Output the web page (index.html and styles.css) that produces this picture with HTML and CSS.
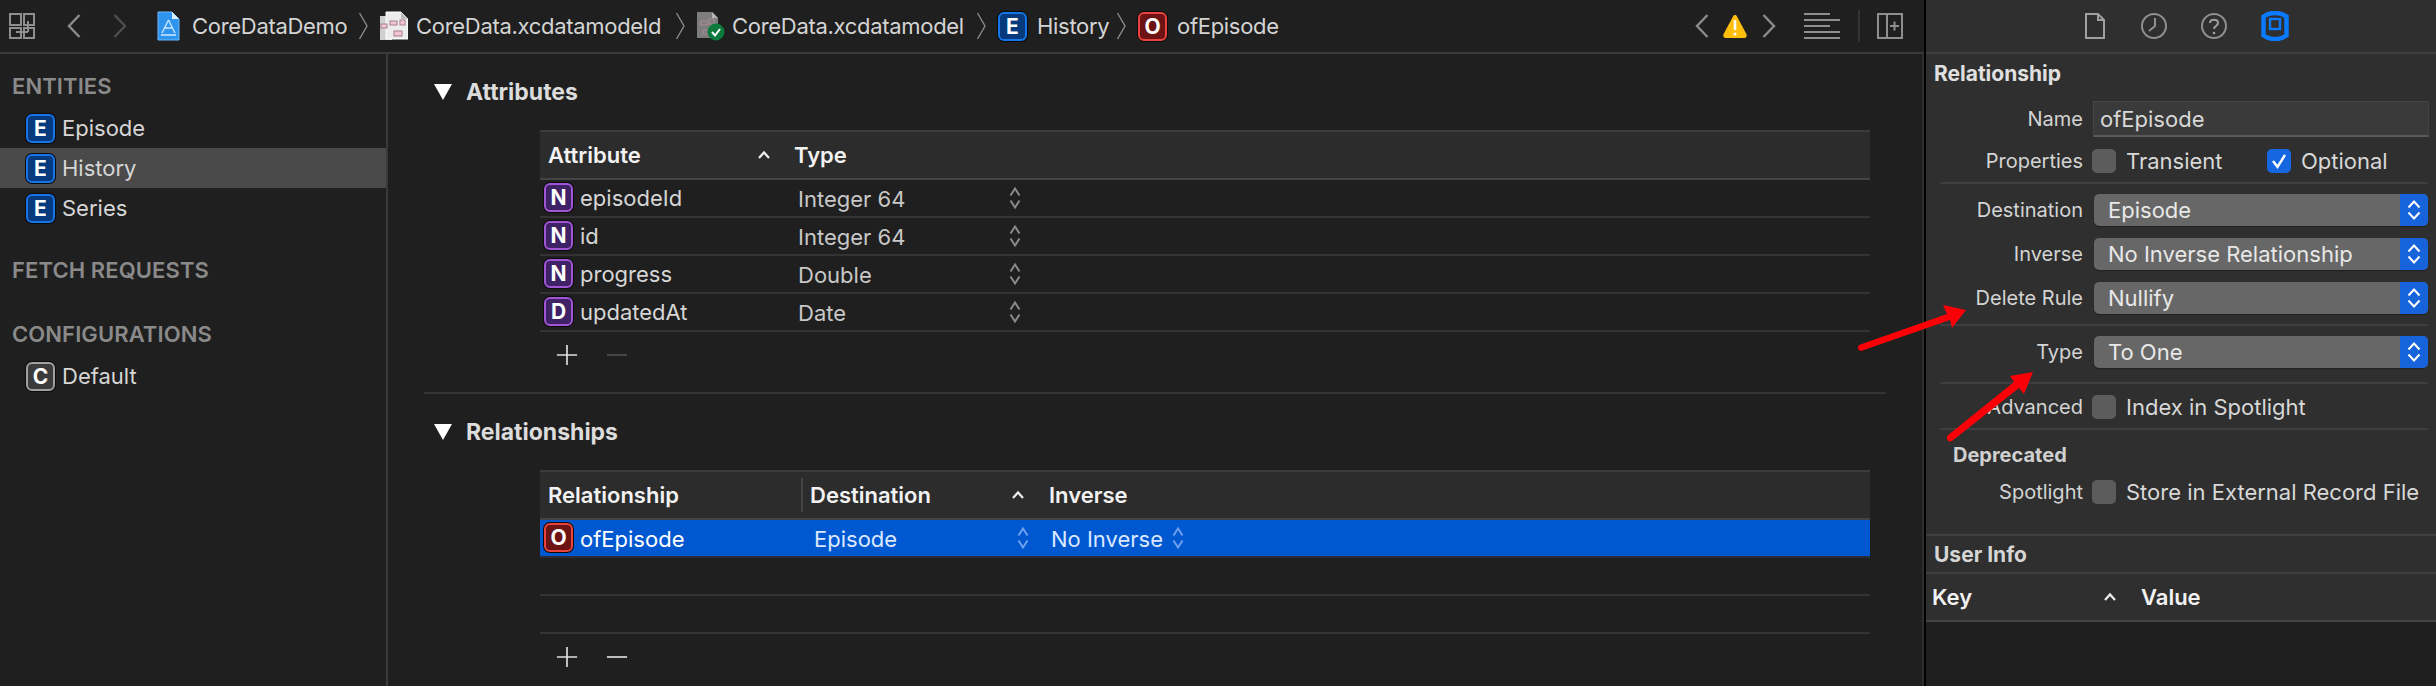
FILE: index.html
```html
<!DOCTYPE html>
<html lang="en">
<head>
<meta charset="utf-8">
<title>CoreData model editor</title>
<link rel="stylesheet" href="styles.css">
</head>
<body>
<svg class="defs" width="0" height="0">
  <symbol id="updown" viewBox="0 0 12 24"><path d="M1.500 9.500 L6 2.500 L10.500 9.500 M1.500 14.500 L6 21.500 L10.500 14.500" fill="none" stroke="currentColor" stroke-width="2"/></symbol>
  <symbol id="sort" viewBox="0 0 14 10"><path d="M2 8 L7 2.500 L12 8" fill="none" stroke="currentColor" stroke-width="2.200"/></symbol>
  <symbol id="sep" viewBox="0 0 11 28"><path d="M1.500 1 L9 14 L1.500 27" fill="none" stroke="#8a8a8a" stroke-width="1.400"/></symbol>
  <symbol id="plus" viewBox="0 0 24 24"><path d="M12 1 V23 M1 12 H23" fill="none" stroke="currentColor" stroke-width="1.800"/></symbol>
  <symbol id="minus" viewBox="0 0 24 24"><path d="M1 12 H23" fill="none" stroke="currentColor" stroke-width="1.800"/></symbol>
  <symbol id="selarrows" viewBox="0 0 14 22"><path d="M1.500 8.500 L7 2.500 L12.500 8.500 M1.500 13.500 L7 19.500 L12.500 13.500" fill="none" stroke="#fff" stroke-width="2"/></symbol>
  <symbol id="chevl" viewBox="0 0 14 24"><path d="M12.500 1 L2 12 L12.500 23" fill="none" stroke="currentColor" stroke-width="2.400"/></symbol>
  <symbol id="chevr" viewBox="0 0 14 24"><path d="M1.500 1 L12 12 L1.500 23" fill="none" stroke="currentColor" stroke-width="2.400"/></symbol>
</svg>
<div class="app">
  <div class="editor">
    <header class="toolbar">
      <svg class="ic-grid" width="26" height="26" viewBox="0 0 26 26"><g fill="none" stroke="#8f8f8f" stroke-width="2"><rect x="1" y="1" width="11" height="11"/><path d="M15 1 H25 V12 H15 Z M1 15 H12 V25 H1 Z M15 15 H25 V25 H15 Z M19 8 V19 M7 19 H19"/></g></svg>
      <svg class="nav nav-back" width="14" height="24"><use href="#chevl"/></svg>
      <svg class="nav nav-fwd" width="14" height="24"><use href="#chevr"/></svg>
      <nav class="crumbs">
        <svg class="crumb-file" width="23" height="30" viewBox="0 0 23 30"><path d="M1 1 H15 L22 8 V29 H1 Z" fill="#2f94ee" stroke="#6bbcff"/><path d="M15 1 V8 H22 Z" fill="#d9eeff"/><path d="M11.500 9 L5 22 M11.500 9 L18 22 M7 17 H16 M4 24 H19" stroke="#cfe8ff" stroke-width="1.300" fill="none"/></svg>
        <span class="crumb c1">CoreDataDemo</span>
        <svg class="crumb-sep" width="11" height="28"><use href="#sep"/></svg>
        <svg class="crumb-file" width="28" height="30" viewBox="0 0 28 30"><path d="M0 5 H12 V29 H0 Z" fill="#cfcfcf"/><path d="M6 1 H21 L28 8 V28 H6 Z" fill="#ececec" stroke="#fff"/><path d="M21 1 V8 H28 Z" fill="#bcbcbc"/><g fill="#f2c6d0" stroke="#a77f92"><rect x="10" y="10" width="7" height="4"/><rect x="20" y="9" width="5" height="5"/><rect x="14" y="20" width="8" height="5"/><rect x="1" y="13" width="6" height="4"/></g></svg>
        <span class="crumb c2">CoreData.xcdatamodeld</span>
        <svg class="crumb-sep" width="11" height="28"><use href="#sep"/></svg>
        <svg class="crumb-file" width="28" height="30" viewBox="0 0 28 30"><path d="M0 1 H15 L21 7 V27 H0 Z" fill="#7d7d7d"/><path d="M15 1 V7 H21 Z" fill="#b5b5b5"/><g fill="none" stroke="#a88c95"><rect x="4" y="10" width="6" height="4"/><rect x="12" y="8" width="5" height="5"/><rect x="6" y="19" width="6" height="4"/></g><circle cx="19" cy="21" r="8.500" fill="#0c7a3c"/><path d="M15 21 L18 24.500 L23 18" fill="none" stroke="#fff" stroke-width="2"/></svg>
        <span class="crumb c3">CoreData.xcdatamodel</span>
        <svg class="crumb-sep" width="11" height="28"><use href="#sep"/></svg>
        <span class="badge badge-e">E</span>
        <span class="crumb c4">History</span>
        <svg class="crumb-sep" width="11" height="28"><use href="#sep"/></svg>
        <span class="badge badge-o">O</span>
        <span class="crumb c5">ofEpisode</span>
      </nav>
      <div class="tools">
        <svg class="nav" width="14" height="24"><use href="#chevl"/></svg>
        <svg class="warn" width="24" height="24" viewBox="0 0 24 24"><path d="M12 1 C13 1 13.600 1.600 14 2.400 L23.400 20 C24.300 22 23.200 24 21 24 H3 C0.800 24 -0.300 22 0.600 20 L10 2.400 C10.400 1.600 11 1 12 1 Z" fill="#ffbe0a"/><path d="M12 6 V16" stroke="#fff" stroke-width="2.600"/><circle cx="12" cy="20" r="1.600" fill="#fff"/></svg>
        <svg class="nav nav-next" width="14" height="24"><use href="#chevr"/></svg>
        <svg class="ic-lines" width="36" height="26" viewBox="0 0 36 26"><path d="M0 1 H26 M0 7 H36 M0 13 H26 M0 19 H36 M0 25 H36" stroke="#8f8f8f" stroke-width="2"/></svg>
        <span class="tool-div"></span>
        <svg class="ic-split" width="26" height="26" viewBox="0 0 26 26"><g fill="none" stroke="#8f8f8f" stroke-width="2"><rect x="1" y="1" width="24" height="24"/><path d="M10 1 V25 M13 13 H22 M17.500 8.500 V17.500"/></g></svg>
      </div>
    </header>
    <div class="body">
      <aside class="sidebar">
        <h3 class="group-head">ENTITIES</h3>
        <ul class="list">
          <li class="item"><span class="badge badge-e">E</span>Episode</li>
          <li class="item item-selected"><span class="badge badge-e">E</span>History</li>
          <li class="item"><span class="badge badge-e">E</span>Series</li>
        </ul>
        <h3 class="group-head group-fetch">FETCH REQUESTS</h3>
        <h3 class="group-head group-config">CONFIGURATIONS</h3>
        <ul class="list">
          <li class="item"><span class="badge badge-c">C</span>Default</li>
        </ul>
      </aside>
      <main class="main">
        <section class="section section-line">
          <h2 class="section-head"><span class="tri"></span>Attributes</h2>
          <div class="table">
            <div class="thead attr-cols">
              <span>Attribute</span>
              <svg class="sort" width="14" height="10"><use href="#sort"/></svg>
              <span>Type</span>
            </div>
            <div class="row attr-row"><span class="badge badge-n">N</span><span class="name">episodeId</span><span class="val">Integer 64</span><svg class="updown" width="12" height="24"><use href="#updown"/></svg></div>
            <div class="row attr-row"><span class="badge badge-n">N</span><span class="name">id</span><span class="val">Integer 64</span><svg class="updown" width="12" height="24"><use href="#updown"/></svg></div>
            <div class="row attr-row"><span class="badge badge-n">N</span><span class="name">progress</span><span class="val">Double</span><svg class="updown" width="12" height="24"><use href="#updown"/></svg></div>
            <div class="row attr-row"><span class="badge badge-d">D</span><span class="name">updatedAt</span><span class="val">Date</span><svg class="updown" width="12" height="24"><use href="#updown"/></svg></div>
            <div class="tfoot">
              <svg class="add" width="22" height="22"><use href="#plus"/></svg>
              <svg class="remove remove-off" width="22" height="22"><use href="#minus"/></svg>
            </div>
          </div>
        </section>
        <section class="section">
          <h2 class="section-head"><span class="tri"></span>Relationships</h2>
          <div class="table">
            <div class="thead rel-cols">
              <span class="rel-name">Relationship</span>
              <span class="col-div"></span>
              <span class="rel-dest">Destination</span>
              <svg class="sort" width="14" height="10"><use href="#sort"/></svg>
              <span>Inverse</span>
            </div>
            <div class="row rel-row row-selected"><span class="badge badge-o">O</span><span class="name">ofEpisode</span><span class="val val-dest">Episode</span><svg class="updown" width="12" height="24"><use href="#updown"/></svg><span class="val val-inv">No Inverse</span><svg class="updown" width="12" height="24"><use href="#updown"/></svg></div>
            <div class="row row-empty"></div>
            <div class="row row-empty"></div>
            <div class="tfoot">
              <svg class="add" width="22" height="22"><use href="#plus"/></svg>
              <svg class="remove" width="22" height="22"><use href="#minus"/></svg>
            </div>
          </div>
        </section>
      </main>
    </div>
  </div>
  <aside class="inspector">
    <div class="tabs">
      <svg class="tab-doc" width="20" height="26" viewBox="0 0 20 26"><path d="M1 1 H13 L19 7 V25 H1 Z M13 1 V7 H19" fill="none" stroke="#a0a0a0" stroke-width="2"/></svg>
      <svg width="26" height="26" viewBox="0 0 26 26"><circle cx="13" cy="13" r="12" fill="none" stroke="#8f8f8f" stroke-width="2"/><path d="M14 5 V13 L8 18" fill="none" stroke="#8f8f8f" stroke-width="2"/></svg>
      <svg width="26" height="26" viewBox="0 0 26 26"><circle cx="13" cy="13" r="12" fill="none" stroke="#8f8f8f" stroke-width="2"/><path d="M9 10 C9 5.500 17 5.500 17 10 C17 13 13 13 13 16" fill="none" stroke="#a0a0a0" stroke-width="2"/><circle cx="13" cy="20" r="1.300" fill="#a0a0a0"/></svg>
      <svg width="28" height="30" viewBox="0 0 28 30"><path d="M14 2 C18 2 22 3 25.500 5.500 V24.500 C22 27 18 28 14 28 C10 28 6 27 2.500 24.500 V5.500 C6 3 10 2 14 2 Z" fill="none" stroke="#0a7aff" stroke-width="4.500"/><rect x="9" y="8" width="10" height="10" fill="none" stroke="#0a7aff" stroke-width="2.400"/></svg>
    </div>
    <div class="panel">
      <h4 class="panel-title">Relationship</h4>
      <div class="field field-name"><label class="lab">Name</label><span class="input">ofEpisode</span></div>
      <div class="field field-props">
        <label class="lab">Properties</label>
        <div class="checks">
          <span class="check"></span><span class="check-text check-text-a">Transient</span>
          <span class="check check-on"><svg width="24" height="24" viewBox="0 0 24 24"><path d="M6 12 L10.500 18 L18 6" fill="none" stroke="#fff" stroke-width="2.400"/></svg></span><span class="check-text">Optional</span>
        </div>
      </div>
      <hr class="rule">
      <div class="field field-sel"><label class="lab">Destination</label><div class="select"><span class="sel-text">Episode</span><span class="sel-btn"><svg width="14" height="22"><use href="#selarrows"/></svg></span></div></div>
      <div class="field field-sel field-next"><label class="lab">Inverse</label><div class="select"><span class="sel-text">No Inverse Relationship</span><span class="sel-btn"><svg width="14" height="22"><use href="#selarrows"/></svg></span></div></div>
      <div class="field field-sel field-next"><label class="lab">Delete Rule</label><div class="select"><span class="sel-text">Nullify</span><span class="sel-btn"><svg width="14" height="22"><use href="#selarrows"/></svg></span></div></div>
      <hr class="rule">
      <div class="field field-sel"><label class="lab">Type</label><div class="select"><span class="sel-text">To One</span><span class="sel-btn"><svg width="14" height="22"><use href="#selarrows"/></svg></span></div></div>
      <hr class="rule rule-wide">
      <div class="field field-props field-adv"><label class="lab">Advanced</label><div class="checks"><span class="check"></span><span class="check-text">Index in Spotlight</span></div></div>
      <hr class="rule">
      <h5 class="sub-title">Deprecated</h5>
      <div class="field field-props field-spot"><label class="lab">Spotlight</label><div class="checks"><span class="check"></span><span class="check-text">Store in External Record File</span></div></div>
    </div>
    <h4 class="info-title">User Info</h4>
    <div class="info-head">
      <span class="key">Key</span>
      <svg class="sort" width="14" height="10"><use href="#sort"/></svg>
      <span>Value</span>
    </div>
    <div class="info-body"></div>
  </aside>
  <svg class="arrows" width="2436" height="686" viewBox="0 0 2436 686">
    <path d="M1859 345 L1947 314 L1943 305 L1966 310 L1952 328 L1950 320 L1861 351 Q1856 349 1859 345 Z" fill="#fb0007"/>
    <path d="M1947 436 L2014 382 L2010 376 L2033 372 L2024 394 L2019 388 L1952 441 Q1946 443 1947 436 Z" fill="#fb0007"/>
  </svg>
</div>
</body>
</html>
```
FILE: styles.css
```css
* { box-sizing: border-box; }
html, body { margin: 0; padding: 0; background: #1f1f1f; }
body { width: 2436px; height: 686px; overflow: hidden; font-family: Inter, "Noto Sans", "Liberation Sans", sans-serif; font-size: 22px; color: #d6d6d6; }
.defs { position: absolute; }
h2, h3, h4, h5, ul { margin: 0; padding: 0; list-style: none; }
hr { margin: 0; border: 0; }

.app { position: relative; display: flex; width: 2436px; height: 686px; }
.editor { width: 1924px; display: flex; flex-direction: column; }

/* toolbar */
.toolbar { height: 54px; flex: none; display: flex; align-items: center; border-bottom: 2px solid #3a3a3a; padding-left: 9px; position: relative; }
.nav { color: #8b8b8b; flex: none; }
.nav-back { margin-left: 32px; }
.nav-fwd { margin-left: 32px; color: #4e4e4e; }
.crumbs { display: flex; align-items: center; margin-left: 30px; }
.crumb { white-space: nowrap; color: #d4d4d4; letter-spacing: -0.3px; }
.crumb-sep { margin: 0 0 0 7px; flex: none; }
.crumb-file { flex: none; }
.crumb-sep + .crumb-file, .crumb-sep + .badge { margin-left: 11px; }
.c1 { margin-left: 12px; width: 159px; }
.c2 { margin-left: 8px; width: 252px; }
.c3 { margin-left: 7px; width: 237px; }
.c4 { margin-left: 10px; width: 72px; }
.c5 { margin-left: 10px; }
.tools { margin-left: auto; display: flex; align-items: center; padding-right: 21px; }
.warn { margin-left: 14px; }
.nav-next { margin-left: 15px; }
.ic-lines { margin-left: 28px; }
.tool-div { width: 2px; height: 32px; background: #333; margin-left: 18px; }
.ic-split { margin-left: 17px; }

/* badge */
.badge { flex: none; width: 29px; height: 29px; border-radius: 6px; display: flex; align-items: center; justify-content: center; font-size: 21px; font-weight: 700; color: #fff; border: 2px solid; box-shadow: 0 0 0 1px #0c0c0c; }
.badge-e { background: #063a7c; border-color: #1476e8; }
.badge-n, .badge-d { background: #3f2266; border-color: #a054d6; }
.badge-o { background: #6d1313; border-color: #e8433f; }
.badge-c { background: #3b3b3b; border-color: #a0a0a0; }

/* body */
.body { flex: 1; display: flex; min-height: 0; }
.sidebar { width: 388px; flex: none; border-right: 2px solid #3a3a3a; padding-top: 16px; }
.group-head { height: 32px; display: flex; align-items: center; padding-left: 12px; font-size: 22px; font-weight: 600; color: #8a8a8a; letter-spacing: 0.1px; margin-bottom: 6px; }
.group-fetch { margin-top: 26px; margin-bottom: 0; }
.group-config { margin-top: 32px; }
.item { height: 40px; display: flex; align-items: center; gap: 7px; padding-left: 26px; color: #d6d6d6; }
.item-selected { background: #4a4a4a; }

/* main */
.main { flex: 1; border-right: 2px solid #2e2e2e; padding-left: 36px; padding-top: 22px; min-width: 0; }
.section { width: 1462px; }
.section-line { border-bottom: 2px solid #333; height: 318px; margin-bottom: 22px; }
.section-head { height: 32px; display: flex; align-items: center; gap: 14px; padding-left: 10px; font-size: 23px; font-weight: 700; color: #dcdcdc; margin-bottom: 22px; }
.tri { width: 0; height: 0; border-left: 9px solid transparent; border-right: 9px solid transparent; border-top: 16px solid #fff; margin-top: -1px; }
.table { margin-left: 116px; width: 1330px; }
.thead { height: 50px; background: #2c2c2c; border-top: 2px solid #3c3c3c; border-bottom: 2px solid #444; display: grid; align-items: center; color: #f2f2f2; font-weight: 600; padding-left: 8px; }
.attr-cols { grid-template-columns: 209px 37px 1fr; }
.rel-cols { grid-template-columns: 253px 9px 201px 38px 1fr; }
.col-div { width: 2px; height: 34px; background: #444; }
.sort { color: #eee; justify-self: start; }
.row { height: 38px; border-bottom: 2px solid #333; display: flex; align-items: center; padding-left: 4px; }
.row .badge { margin-top: -1px; }
.name { margin-left: 7px; color: #d6d6d6; }
.val { color: #c8c8c8; }
.attr-row .name { width: 218px; }
.attr-row .val { width: 211px; padding-top: 2px; }
.updown { color: #8a8a8a; flex: none; }
.rel-row .name { width: 234px; }
.row-selected { background: #0058d0; border-bottom-color: #2b2b3a; }
.row-selected .name, .row-selected .val { color: #dbe8ff; padding-top: 1px; }
.row-selected .name { color: #fff; }
.row-selected .updown { color: #6ea0ee; }
.val-dest { width: 203px; }
.val-inv { margin-left: 22px; width: 121px; }
.tfoot { height: 46px; display: flex; align-items: center; padding-left: 16px; gap: 28px; color: #e0e0e0; }
.remove-off { color: #4f4f4f; }

/* inspector */
.inspector { margin-left: 0; flex: 1; border-left: 2px solid #000; background: #2f2f2f; display: flex; flex-direction: column; }
.tabs { height: 54px; flex: none; display: flex; align-items: center; border-bottom: 2px solid #3f3f3f; padding-left: 159px; gap: 34px; }
.tab-doc { margin-right: 2px; }
.panel { padding: 0 8px 32px 0; border-bottom: 2px solid #3f3f3f; height: 482px; }
.panel-title { height: 38px; display: flex; align-items: center; padding-left: 8px; font-size: 21px; font-weight: 700; color: #e0e0e0; margin-bottom: 9px; }
.field { display: grid; grid-template-columns: 157px 1fr; column-gap: 9px; align-items: center; }
.lab { text-align: right; font-size: 20px; color: #d4d4d4; }
.field-name { height: 36px; }
.input { height: 36px; margin-left: 1px; margin-right: -1px; padding-left: 6px; display: flex; align-items: center; background: #3a3a3a; border: 1px solid #444; border-bottom: 2px solid #5a5a5a; color: #d8d8d8; }
.field-props { height: 24px; margin-top: 11px; }
.checks { display: flex; align-items: center; }
.check { width: 24px; height: 24px; border-radius: 5px; background: #5c5c5c; flex: none; display: block; }
.check-on { background: #1566e0; }
.check svg { display: block; }
.check-text { margin-left: 10px; color: #d8d8d8; }
.check-text-a { width: 141px; }
.rule { height: 2px; background: #3f3f3f; margin: 10px 0 10px 14px; }
.field-sel { height: 32px; }
.field-next { margin-top: 12px; }
.select { height: 32px; margin-left: 2px; display: flex; border-radius: 5px; background: #676767; overflow: hidden; box-shadow: 0 1px 1px #222; }
.sel-text { flex: 1; padding-left: 14px; display: flex; align-items: center; color: #e8e8e8; }
.sel-btn { width: 28px; background: #1763dc; display: flex; align-items: center; justify-content: center; }
.rule-wide { margin-top: 14px; }
.field-adv { margin-top: 0; }
.sub-title { height: 30px; margin: 0; padding-left: 27px; display: flex; align-items: center; font-size: 20px; font-weight: 700; color: #d0d0d0; }
.field-spot { margin-top: 9px; }
.info-title { height: 36px; flex: none; display: flex; align-items: center; padding-left: 8px; font-size: 21px; font-weight: 700; color: #d6d6d6; }
.info-head { height: 50px; flex: none; border-top: 2px solid #3f3f3f; border-bottom: 2px solid #444; display: grid; grid-template-columns: 171px 38px 1fr; align-items: center; padding-left: 6px; font-weight: 600; color: #f2f2f2; }
.info-body { flex: 1; background: #1f1f1f; }

.arrows { position: absolute; left: 0; top: 0; pointer-events: none; }
```
